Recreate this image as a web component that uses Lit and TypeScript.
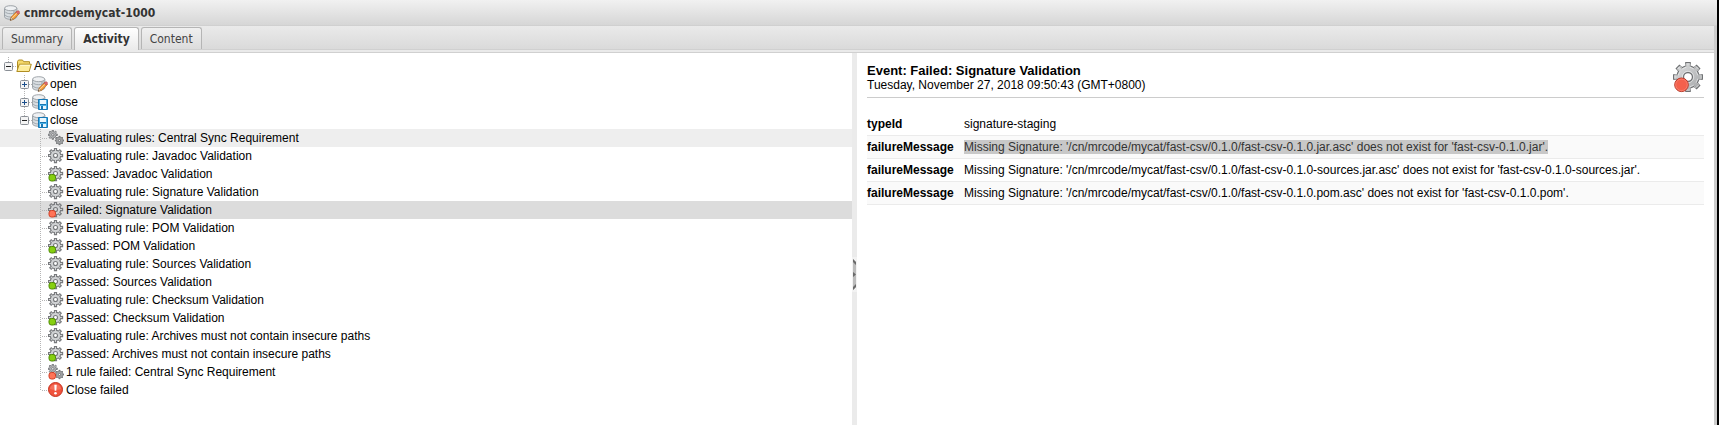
import { LitElement, html, css, svg } from "lit";
import { customElement, property, state } from "lit/decorators.js";

type IconName = "edit" | "saved" | "folder" | "gears" | "gear" | "passed" | "failed" | "gearsFailed" | "error";

function gearPath(cx: number, cy: number, outer: number, inner: number, hole: number, teeth = 8): string {
  const step = (Math.PI * 2) / teeth;
  const point = (r: number, a: number) => `${(cx + r * Math.sin(a)).toFixed(2)} ${(cy - r * Math.cos(a)).toFixed(2)}`;
  let d = "";
  for (let i = 0; i < teeth; i++) {
    const a = i * step;
    d += `${i ? "L" : "M"}${point(inner, a - step * 0.26)}L${point(outer, a - step * 0.19)}L${point(outer, a + step * 0.19)}L${point(inner, a + step * 0.26)}`;
    d += `A${inner} ${inner} 0 0 1 ${point(inner, a + step * 0.74)}`;
  }
  return `${d}ZM${cx - hole} ${cy}a${hole} ${hole} 0 1 0 ${hole * 2} 0a${hole} ${hole} 0 1 0 ${-hole * 2} 0Z`;
}

const gear = svg`<path d=${gearPath(7.5, 7.5, 7.2, 5.2, 2)} fill="#cfd1d3" stroke="#77797c" stroke-width="1.1" fill-rule="evenodd"/>`;
const gearPair = svg`
  <path d=${gearPath(4.8, 4.8, 4.6, 3.2, 1.2)} fill="#b0b2b4" stroke="#737578" stroke-width=".9" fill-rule="evenodd"/>
  <path d=${gearPath(11.5, 10.5, 4.2, 3, 1.1)} fill="#a6a8aa" stroke="#6c6e70" stroke-width=".9" fill-rule="evenodd"/>`;
const redDot = svg`<rect x="1" y="8.5" width="6.5" height="6.5" rx="2.4" fill="#ff7458" stroke="#d23c22"/>`;
const greenDot = svg`<rect x="1" y="8.5" width="6.5" height="6.5" rx="2.4" fill="#86cf10" stroke="#4d8a00"/>`;
const cylinder = svg`
  <path d="M.6 3.2v8.600c0 1.400 2.700 2.500 6.100 2.500s6.100-1.100 6.100-2.500V3.200Z" fill="#d8dde1" stroke="#969ca2"/>
  <path d="M9 5.200h3.300v7.100L9 13.700Z" fill="#b7bec4"/>
  <path d="M1.100 6.700c.6 1.200 2.900 2 5.600 2s5-.8 5.600-2M1.100 10c.6 1.200 2.900 2 5.600 2s5-.8 5.600-2" fill="none" stroke="#a2a9af"/>
  <ellipse cx="6.700" cy="3.200" rx="6.100" ry="2.500" fill="#eff1f3" stroke="#969ca2" stroke-width=".9"/>`;

const drawings = {
  gear,
  gears: gearPair,
  passed: svg`${gear}${greenDot}`,
  failed: svg`${gear}${redDot}`,
  gearsFailed: svg`${gearPair}${redDot}`,
  edit: svg`${cylinder}
    <path d="m6.300 15.200.9-3.100 5.900-6 2.400 2.300-6 6Z" fill="#f7a13b" stroke="#b5651d" stroke-width=".7"/>
    <path d="m8.200 13 5.900-6" stroke="#ffd79c"/>
    <path d="m12 7.200 1.300-1.300q.8-.6 1.700.2t.3 1.800L14 9.300Z" fill="#e0686e" stroke="#a8484e" stroke-width=".5"/>
    <path d="m6.200 15.300.9-3 2.200 2Z" fill="#f5dfc0" stroke="#80664a" stroke-width=".5"/>
    <path d="m6.100 15.400.4-1.300.9.800Z" fill="#333"/>`,
  saved: svg`${cylinder}
    <path d="M6.500 5.500h9v10h-9Z" fill="#49b1e8" stroke="#1677b4"/>
    <path d="M8 6h6v4H8ZM8 12h6v3H8Z" fill="#e9f6fd"/>
    <path d="M9 12h2v3H9ZM8 10h6v1H8Z" fill="#1677b4"/>`,
  folder: svg`
    <path d="M1.500 13.500v-10l1-1.500h4l1.200 1.700h5.800v2" fill="#f5d96c" stroke="#b08d22"/>
    <path d="M.8 13.500 3.300 6.200h12l-2.100 7.300Z" fill="#fdec9b" stroke="#b08d22" stroke-linejoin="round"/>
    <path d="M4.200 7.300h9.800" stroke="#fffad8"/>`,
  error: svg`
    <circle cx="7.500" cy="7.500" r="7" fill="#f0533d" stroke="#c5321f"/>
    <path d="M1.800 7a5.800 5.500 0 0 1 11.400 0q-5.700 2-11.400 0Z" fill="#f98672" opacity=".6"/>
    <path d="M6.300 2.800h2.400l-.4 6H6.700Z" fill="#fff"/><circle cx="7.500" cy="11.300" r="1.300" fill="#fff"/>`,
};

const icon = (name: IconName) => html`<svg class="icon" viewBox="0 0 16 16" aria-hidden="true">${drawings[name]}</svg>`;

interface Activity {
  icon: IconName;
  text: string;
  highlighted?: boolean;
}

const folders: { icon: IconName; text: string; open: boolean }[] = [
  { icon: "edit", text: "open", open: false },
  { icon: "saved", text: "close", open: false },
  { icon: "saved", text: "close", open: true },
];

const activities: Activity[] = [
  { icon: "gears", text: "Evaluating rules: Central Sync Requirement", highlighted: true },
  { icon: "gear", text: "Evaluating rule: Javadoc Validation" },
  { icon: "passed", text: "Passed: Javadoc Validation" },
  { icon: "gear", text: "Evaluating rule: Signature Validation" },
  { icon: "failed", text: "Failed: Signature Validation" },
  { icon: "gear", text: "Evaluating rule: POM Validation" },
  { icon: "passed", text: "Passed: POM Validation" },
  { icon: "gear", text: "Evaluating rule: Sources Validation" },
  { icon: "passed", text: "Passed: Sources Validation" },
  { icon: "gear", text: "Evaluating rule: Checksum Validation" },
  { icon: "passed", text: "Passed: Checksum Validation" },
  { icon: "gear", text: "Evaluating rule: Archives must not contain insecure paths" },
  { icon: "passed", text: "Passed: Archives must not contain insecure paths" },
  { icon: "gearsFailed", text: "1 rule failed: Central Sync Requirement" },
  { icon: "error", text: "Close failed" },
];

@customElement("activity-tree")
export class ActivityTree extends LitElement {
  @state() private selected = 4;

  static styles = css`
    :host { display: block; min-width: 0; overflow: hidden; padding-top: 4px; background: #fff; }
    ul { list-style: none; margin: 0; padding: 0; }
    .row {
      display: flex; align-items: center; box-sizing: border-box; width: 100%; height: 18px;
      margin: 0; border: 0; padding: 0 0 0 4px; background: none; color: #000; text-align: left;
      font: 12px/18px "Liberation Sans", Arial, sans-serif; white-space: nowrap; cursor: pointer;
    }
    .icon { flex: none; width: 16px; height: 16px; margin-right: 2px; }
    .cell { flex: none; display: block; }
    .highlighted { background: #eee; }
    .selected { background: #dcdcdc; }
  `;

  private expander(open: boolean, tail: boolean) {
    return html`<svg class="cell" width="12" height="18" viewBox="0 0 12 18" aria-hidden="true">
      <path d=${`M4.500 0V5${tail ? "M4.500 14V18" : ""}M9 9.500H12`} stroke="#b5b5b5" stroke-dasharray="1 1" />
      <rect x=".5" y="5.500" width="8" height="8" rx="1" fill="#f4f4f4" stroke="#8a8f96" />
      <path d=${`M2 9.500H7${open ? "" : "M4.500 7V12"}`} stroke=${open ? "#222" : "#1c4f8c"} />
    </svg>`;
  }

  render() {
    return html`<ul role="tree" aria-label="Activities">
      <li role="none">
        <button class="row" role="treeitem" aria-expanded="true">${this.expander(true, false)}${icon("folder")}<span>Activities</span></button>
      </li>
      ${folders.map((f, i) => html`<li role="none">
        <button class="row" role="treeitem" aria-expanded=${f.open}>
          <svg class="cell" width="16" height="18" aria-hidden="true"></svg>${this.expander(f.open, i < folders.length - 1)}${icon(f.icon)}<span>${f.text}</span>
        </button>
      </li>`)}
      ${activities.map((a, i) => html`<li role="none">
        <button class="row ${i === this.selected ? "selected" : a.highlighted ? "highlighted" : ""}" role="treeitem"
          aria-selected=${i === this.selected} @click=${() => (this.selected = i)}>
          <svg class="cell" width="44" height="18" aria-hidden="true">
            <path d=${`M36.500 0V${i === activities.length - 1 ? 10 : 18}M38 9.500H44`} stroke="#b5b5b5" stroke-dasharray="1 1" />
          </svg>${icon(a.icon)}<span>${a.text}</span>
        </button>
      </li>`)}
    </ul>`;
  }
}

const event = {
  title: "Event: Failed: Signature Validation",
  date: "Tuesday, November 27, 2018 09:50:43 (GMT+0800)",
  fields: [
    { name: "typeId", value: "signature-staging" },
    { name: "failureMessage", value: "Missing Signature: '/cn/mrcode/mycat/fast-csv/0.1.0/fast-csv-0.1.0.jar.asc' does not exist for 'fast-csv-0.1.0.jar'.", marked: true },
    { name: "failureMessage", value: "Missing Signature: '/cn/mrcode/mycat/fast-csv/0.1.0/fast-csv-0.1.0-sources.jar.asc' does not exist for 'fast-csv-0.1.0-sources.jar'." },
    { name: "failureMessage", value: "Missing Signature: '/cn/mrcode/mycat/fast-csv/0.1.0/fast-csv-0.1.0.pom.asc' does not exist for 'fast-csv-0.1.0.pom'." },
  ] as { name: string; value: string; marked?: boolean }[],
};

@customElement("event-details")
export class EventDetails extends LitElement {
  static styles = css`
    :host { display: block; min-width: 0; padding: 8px 10px; background: #fff; color: #000; font: 12px/14px "Liberation Sans", Arial, sans-serif; }
    header { display: flex; justify-content: space-between; height: 36px; border-bottom: 1px solid #ccc; }
    h2 { margin: 2px 0 0; font-size: 13px; line-height: 15px; }
    p { margin: 0; }
    .status { flex: none; width: 32px; height: 32px; }
    table { width: 100%; margin-top: 15px; border-collapse: collapse; }
    th, td { height: 22px; padding: 0; border-bottom: 1px solid #ebebeb; text-align: left; white-space: nowrap; }
    th { width: 97px; }
    tr:nth-child(even) { background: #fafafa; }
    mark { background: #c8c8c8; color: #333; }
  `;

  render() {
    return html`
      <header>
        <div><h2>${event.title}</h2><p>${event.date}</p></div>
        <svg class="status" viewBox="0 0 32 32" aria-hidden="true">
          <defs><linearGradient id="metal" x2="1" y2="1"><stop stop-color="#e0e1e2" /><stop offset="1" stop-color="#a2a4a6" /></linearGradient></defs>
          <path d=${gearPath(16, 16, 14.5, 11, 4.5)} fill="url(#metal)" stroke="#707274" stroke-width="1.300" fill-rule="evenodd" />
          <path d=${gearPath(16, 16, 13.3, 9.8, 5.7)} fill="none" stroke="#f1f2f3" stroke-width=".8" opacity=".8" />
          <circle cx="9.500" cy="23.800" r="6.800" fill="#f4604c" stroke="#b83424" />
          <circle cx="9.500" cy="23.800" r="5.800" fill="none" stroke="#fa8a78" stroke-width=".7" />
        </svg>
      </header>
      <table><tbody>
        ${event.fields.map((f) => html`<tr><th scope="row">${f.name}</th><td>${f.marked ? html`<mark>${f.value}</mark>` : f.value}</td></tr>`)}
      </tbody></table>`;
  }
}

@customElement("app-root")
export class AppRoot extends LitElement {
  @property() heading = "cnmrcodemycat-1000";
  @state() private tab = "Activity";

  static styles = css`
    :host {
      display: flex; flex-direction: column; box-sizing: border-box; min-height: 100vh;
      border-right: 2px solid #000; background: #ccc; color: #333;
      font: 12px/16px "DejaVu Sans Condensed", Tahoma, sans-serif;
    }
    .title { display: flex; align-items: center; gap: 4px; height: 25px; padding-left: 4px; border-bottom: 1px solid #d0d0d0; background: linear-gradient(#f1f1f1, #d6d6d6); }
    .icon { width: 16px; height: 16px; }
    h1 { margin: 0; font-size: 12px; line-height: 16px; }
    .panel { flex: 1; display: flex; flex-direction: column; margin-right: 3px; }
    nav { display: flex; gap: 2px; height: 22px; padding: 1px 2px 0; border-bottom: 1px solid #d0d0d0; background: linear-gradient(#eaeaea, #dadada); }
    .tab { height: 22px; padding: 0 8px; border: 1px solid #b5b5b5; border-bottom: 0; border-radius: 3px 3px 0 0; background: linear-gradient(#f0f0f0, #dcdcdc); color: #444; font: inherit; }
    .active { height: 23px; background: linear-gradient(#fff, #eaeaea); color: #333; font-weight: bold; }
    .strip { height: 2px; border-bottom: 1px solid #d0d0d0; background: #eaeaea; }
    main { flex: 1; display: grid; grid-template-columns: 852fr 5px 857fr; background: #fff; }
    .splitter { display: flex; align-items: center; justify-content: center; padding-top: 70px; background: #ebebeb; }
    .collapse { display: block; width: 5px; height: 35px; padding: 0; border: 0; background: none; }
    .grip { display: block; }
  `;

  render() {
    return html`
      <header class="title">${icon("edit")}<h1>${this.heading}</h1></header>
      <div class="panel">
        <nav role="tablist">
          ${["Summary", "Activity", "Content"].map((t) => html`<button class="tab ${t === this.tab ? "active" : ""}" role="tab"
            aria-selected=${t === this.tab} @click=${() => (this.tab = t)}>${t}</button>`)}
        </nav>
        <div class="strip"></div>
        <main>
          <activity-tree></activity-tree>
          <div class="splitter">
            <button class="collapse" aria-label="Collapse details">
              <svg class="grip" width="5" height="35" aria-hidden="true">
                <path d="M0 0H5V35H0Z" fill="#f2f2f2" /><path d="M1 2 4 5V30L1 33Z" fill="#bcbcbc" />
                <path d="M1 2 4 5V8L1 5ZM1 15 4 17.500 1 20ZM1 33 4 30V27L1 30Z" fill="#6a6a6a" />
              </svg>
            </button>
          </div>
          <event-details></event-details>
        </main>
      </div>`;
  }
}
